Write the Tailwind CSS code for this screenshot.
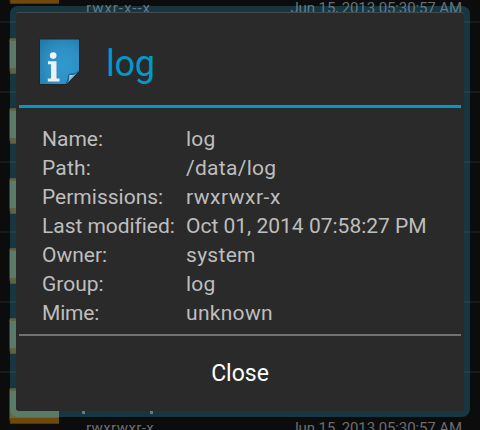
<!DOCTYPE html>
<html lang="en">

<head>
    <meta charset="UTF-8">
    <title>File properties</title>
    <script src="https://cdn.jsdelivr.net/npm/@tailwindcss/browser@4"></script>
</head>

<body class="bg-[#0c0c0c] font-['Roboto',sans-serif] overflow-hidden">
    <div class="relative w-[480px] h-[430px] overflow-hidden">
        <!-- dimmed file list -->
        <div id="file-list" class="-mt-[47px]"></div>

        <!-- lower edge of the last file name, showing under the dialog -->
        <div class="absolute left-[82px] top-[411px] w-[71px] h-[3px] flex justify-between">
            <span class="w-[3px] bg-[#6a6a6a]"></span>
            <span class="w-[3px] bg-[#6a6a6a]"></span>
        </div>

        <!-- dialog -->
        <div class="absolute left-[10px] top-[6px] w-[460px] h-[411px] rounded-lg bg-[#33b5e5]/25 p-[6px]">
            <div class="h-full flex flex-col bg-[#2a2a2a] rounded-[3px] border-t border-[#484848] px-[3px]">
                <div class="h-[95px] shrink-0 border-b-[3px] border-[#0099cc] flex items-center pl-[19px] pt-[6px]">
                    <svg class="w-[44px] h-[50px] shrink-0" viewBox="0 0 44 50">
                        <defs>
                            <radialGradient id="paper" cx="0.6" cy="0.6" r="0.75">
                                <stop offset="0" stop-color="#3199cf" />
                                <stop offset="0.55" stop-color="#2e90c5" />
                                <stop offset="1" stop-color="#237dab" />
                            </radialGradient>
                            <linearGradient id="fold" x1="0" y1="0" x2="1" y2="1">
                                <stop offset="0" stop-color="#2479a6" />
                                <stop offset="0.3" stop-color="#b5dcee" />
                                <stop offset="0.6" stop-color="#4a9cc4" />
                            </linearGradient>
                        </defs>
                        <path d="M2 2.500H41V34L28.500 47H2Z" fill="none" stroke="#1f2426" stroke-width="2" />
                        <path d="M2 2.500H41V34L28.500 47H2Z" fill="url(#paper)" />
                        <path d="M27 47C30 44 29.500 40 30.500 37C34 36 37 37 41 33.500V34L28.500 47Z" fill="#1c658d" />
                        <path d="M28.500 47C31.500 44.500 31 41 31.500 38C35 38.500 38 37.500 41 34Z" fill="url(#fold)" />
                        <circle cx="15.200" cy="18.600" r="3.300" fill="#f4f4f4" />
                        <path d="M10 24.200H18.500V41.500H21.500V44.500H9.800V41.500H13V27.200H10Z" fill="#f0f0f0" />
                    </svg>
                    <div class="ml-[24px] mt-[4px] text-[36px] leading-none tracking-[-0.3px] text-[#0099cc]">log</div>
                </div>
                <div class="h-[228px] shrink-0 border-b-2 border-[#727272] grid grid-cols-[144px_1fr] auto-rows-[29px] pt-[17px] pl-[23px] text-[21px] leading-[29px] text-[#bebebe] whitespace-nowrap">
                    <div>Name:</div>
                    <div class="tracking-[0.2px]">log</div>
                    <div class="tracking-[0.2px]">Path:</div>
                    <div class="tracking-[0.3px]">/data/log</div>
                    <div>Permissions:</div>
                    <div class="tracking-[0.5px]">rwxrwxr-x</div>
                    <div class="tracking-[-0.05px]">Last modified:</div>
                    <div>Oct 01, 2014 07:58:27 PM</div>
                    <div>Owner:</div>
                    <div class="tracking-[0.3px]">system</div>
                    <div>Group:</div>
                    <div class="tracking-[0.2px]">log</div>
                    <div class="tracking-[-0.2px]">Mime:</div>
                    <div class="tracking-[0.3px]">unknown</div>
                </div>
                <button type="button" class="flex-1 text-[23px] text-white pt-px">Close</button>
            </div>
        </div>
    </div>

    <!-- one list row, repeated down the screen -->
    <template id="row">
        <div class="h-[70px] border-b-2 border-[#191919] flex items-end pl-[9px] pr-[18px]">
            <svg class="w-[50px] h-[36px] mb-[17px] shrink-0" viewBox="0 0 50 36">
                <path d="M1 0H50V36H1V3H0Z" fill="#70480c" />
                <path d="M1 3H50V30H1Z" fill="#67683f" />
                <path d="M0.500 3V30L1.500 35.500H50" fill="none" stroke="#50380a" />
                <path d="M1 0.500H50" fill="none" stroke="#50400f" />
            </svg>
            <div class="ml-[27px] grow flex justify-between text-[15px] leading-[18px] text-[#6c6c6c] mb-[4px] whitespace-nowrap">
                <span class="perm"></span>
                <span class="date tracking-[-0.1px]"></span>
            </div>
        </div>
    </template>
    <script>
        // only the first and last rows stick out from behind the dialog
        const rows = [
            { perm: 'rwxr-x--x', date: 'Jun 15, 2013 05:30:57 AM', spacing: 'tracking-[0.95px]' },
            {}, {}, {}, {}, {},
            { perm: 'rwxrwxr-x', date: 'Jun 15, 2013 05:30:57 AM', spacing: 'tracking-[0.4px]' },
        ];
        const list = document.getElementById('file-list');
        const template = document.getElementById('row');
        rows.forEach((row) => {
            const item = template.content.cloneNode(true);
            const perm = item.querySelector('.perm');
            perm.textContent = row.perm || '';
            if (row.spacing) perm.classList.add(row.spacing);
            item.querySelector('.date').textContent = row.date || '';
            list.appendChild(item);
        });
    </script>
</body>

</html>
